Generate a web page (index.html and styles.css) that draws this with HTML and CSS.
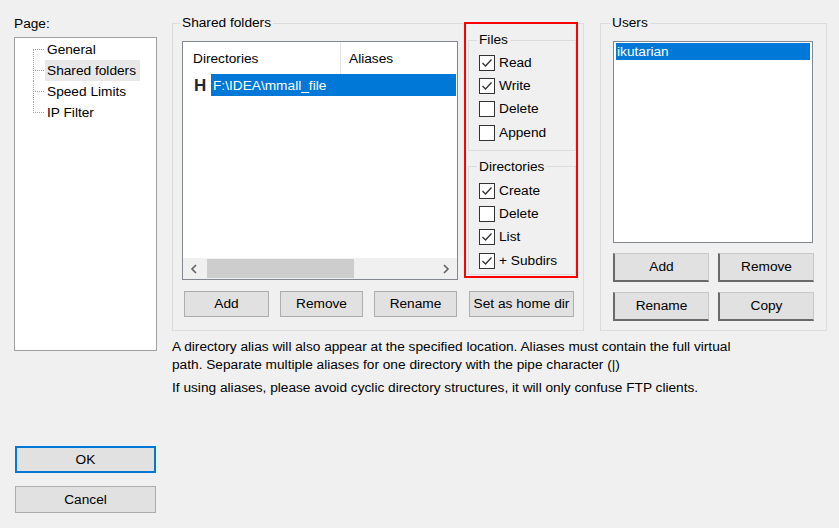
FILE: index.html
```html
<!DOCTYPE html>
<html lang="en">
<head>
<meta charset="utf-8">
<title>Shared folders</title>
<link rel="stylesheet" href="styles.css">
</head>
<body>
<div class="window">
  <aside class="nav">
    <div class="nav-label">Page:</div>
    <div class="tree">
      <ul class="tree-list">
        <li class="node first"><span class="conn"></span><span class="node-label">General</span></li>
        <li class="node"><span class="conn"></span><span class="node-label selected">Shared folders</span></li>
        <li class="node"><span class="conn"></span><span class="node-label">Speed Limits</span></li>
        <li class="node last"><span class="conn"></span><span class="node-label">IP Filter</span></li>
      </ul>
    </div>
    <div class="nav-actions">
      <button class="btn btn-default">OK</button>
      <button class="btn">Cancel</button>
    </div>
  </aside>

  <main class="content">
    <div class="groups">
      <fieldset class="group shared">
        <legend>Shared folders</legend>
        <div class="shared-top">
          <div class="listview">
            <div class="lv-header">
              <div class="lv-col lv-col-dir">Directories</div>
              <div class="lv-col lv-col-alias">Aliases</div>
            </div>
            <div class="lv-row">
              <span class="home-mark">H</span>
              <span class="lv-path">F:\IDEA\mmall_file</span>
            </div>
            <div class="lv-fill"></div>
            <div class="hscroll">
              <span class="arrow"><svg width="8" height="10" viewBox="0 0 8 10"><path d="M6 1 L2 5 L6 9" fill="none" stroke="#606060" stroke-width="1.6"/></svg></span>
              <span class="track"><span class="thumb"></span></span>
              <span class="arrow"><svg width="8" height="10" viewBox="0 0 8 10"><path d="M2 1 L6 5 L2 9" fill="none" stroke="#606060" stroke-width="1.6"/></svg></span>
            </div>
          </div>

          <div class="perms">
            <fieldset class="subgroup files">
              <legend>Files</legend>
              <label class="check-row"><span class="check"><svg width="14" height="14" viewBox="0 0 14 14"><path d="M2.5 7 L5.5 10 L11.5 3.5" fill="none" stroke="#333" stroke-width="1.3"/></svg></span>Read</label>
              <label class="check-row"><span class="check"><svg width="14" height="14" viewBox="0 0 14 14"><path d="M2.5 7 L5.5 10 L11.5 3.5" fill="none" stroke="#333" stroke-width="1.3"/></svg></span>Write</label>
              <label class="check-row"><span class="check"></span>Delete</label>
              <label class="check-row"><span class="check"></span>Append</label>
            </fieldset>
            <fieldset class="subgroup dirs">
              <legend>Directories</legend>
              <label class="check-row"><span class="check"><svg width="14" height="14" viewBox="0 0 14 14"><path d="M2.5 7 L5.5 10 L11.5 3.5" fill="none" stroke="#333" stroke-width="1.3"/></svg></span>Create</label>
              <label class="check-row"><span class="check"></span>Delete</label>
              <label class="check-row"><span class="check"><svg width="14" height="14" viewBox="0 0 14 14"><path d="M2.5 7 L5.5 10 L11.5 3.5" fill="none" stroke="#333" stroke-width="1.3"/></svg></span>List</label>
              <label class="check-row"><span class="check"><svg width="14" height="14" viewBox="0 0 14 14"><path d="M2.5 7 L5.5 10 L11.5 3.5" fill="none" stroke="#333" stroke-width="1.3"/></svg></span>+ Subdirs</label>
            </fieldset>
          </div>
        </div>
        <div class="shared-actions">
          <button class="btn btn-add">Add</button>
          <button class="btn btn-mid">Remove</button>
          <button class="btn btn-mid">Rename</button>
          <button class="btn btn-home">Set as home dir</button>
        </div>
      </fieldset>

      <fieldset class="group users">
        <legend>Users</legend>
        <div class="userlist">
          <div class="user selected-user">ikutarian</div>
        </div>
        <div class="user-actions">
          <button class="btn btn3d">Add</button>
          <button class="btn btn3d">Remove</button>
          <button class="btn btn3d">Rename</button>
          <button class="btn btn3d">Copy</button>
        </div>
      </fieldset>
    </div>

    <div class="notes">
      <p>A directory alias will also appear at the specified location. Aliases must contain the full virtual path. Separate multiple aliases for one directory with the pipe character (|)</p>
      <p>If using aliases, please avoid cyclic directory structures, it will only confuse FTP clients.</p>
    </div>
  </main>
</div>
</body>
</html>
```

FILE: styles.css
```css
* { box-sizing: border-box; }

html, body {
  margin: 0;
  padding: 0;
  background: #f0f0f0;
}

body {
  font-family: "Liberation Sans", Arial, sans-serif;
  font-size: 13.7px;
  line-height: 18px;
  color: #000;
}

.window {
  display: flex;
  align-items: flex-start;
  padding: 14px 0 0 14px;
  width: 839px;
  height: 528px;
}

/* ---------- left navigation ---------- */
.nav {
  width: 143px;
  display: flex;
  flex-direction: column;
}

.nav-label {
  height: 18px;
  padding-top: 1px;
}

.tree {
  margin-top: 5px;
  height: 314px;
  background: #fff;
  border: 1px solid #a0a0a0;
  padding-top: 1px;
}

.tree-list {
  list-style: none;
  margin: 0;
  padding: 0 0 0 18px;
}

.node {
  display: flex;
  height: 21px;
  align-items: center;
}

.conn {
  width: 12px;
  align-self: stretch;
  background-image:
    repeating-linear-gradient(to right, #a0a0a0 0 1px, transparent 1px 2px),
    repeating-linear-gradient(to bottom, #a0a0a0 0 1px, transparent 1px 2px);
  background-repeat: no-repeat;
  background-size: 12px 1px, 1px 100%;
  background-position: 0 50%, 0 0;
}

.node.first .conn {
  background-size: 12px 1px, 1px 50%;
  background-position: 0 50%, 0 100%;
}

.node.last .conn {
  background-size: 12px 1px, 1px 11px;
  background-position: 0 50%, 0 0;
}

.node-label {
  padding: 0 4px 0 2px;
  line-height: 21px;
}

.node-label.selected {
  background: #e8e8e8;
}

.nav-actions {
  display: flex;
  flex-direction: column;
  gap: 13px;
  margin-top: 95px;
  padding-left: 1px;
}

/* ---------- buttons ---------- */
.btn {
  font: inherit;
  color: #000;
  background: #e1e1e1;
  border: 1px solid #adadad;
  padding: 0;
  margin: 0;
  height: 26px;
}

.nav-actions .btn {
  width: 141px;
  height: 27px;
}

.btn-default {
  border: 2px solid #0078d7;
}

/* ---------- right content ---------- */
.content {
  margin-left: 15px;
  display: flex;
  flex-direction: column;
}

.groups {
  display: flex;
  align-items: stretch;
}

.group {
  margin: 0;
  border: 1px solid #dcdcdc;
  min-width: 0;
  height: 317px;
}

.group legend,
.subgroup legend {
  padding: 0 2px;
  margin-left: -2px;
  line-height: 18px;
}

.shared {
  width: 412px;
  padding: 9px 0 0 9px;
}

.shared-top {
  display: flex;
  align-items: flex-start;
  gap: 6px;
}

/* list view */
.listview {
  width: 276px;
  height: 239px;
  background: #fff;
  border: 1px solid #828790;
  display: flex;
  flex-direction: column;
}

.lv-header {
  display: flex;
  height: 32px;
  line-height: 33px;
}

.lv-col-dir {
  width: 158px;
  padding-left: 10px;
  border-right: 1px solid #e5e5e5;
}

.lv-col-alias {
  padding-left: 8px;
}

.lv-row {
  display: flex;
  height: 22px;
  align-items: stretch;
}

.home-mark {
  width: 28px;
  padding-left: 11px;
  font-weight: bold;
  font-size: 17px;
  line-height: 23px;
  color: #1c2636;
}

.lv-path {
  flex: 1;
  margin-right: 1px;
  background: #0078d7;
  color: #fff;
  padding-left: 2px;
  line-height: 23px;
}

.lv-fill {
  flex: 1;
}

.hscroll {
  height: 21px;
  display: flex;
  align-items: center;
  background: #f0f0f0;
}

.arrow {
  width: 22px;
  height: 100%;
  display: flex;
  align-items: center;
  justify-content: center;
}

.track {
  flex: 1;
  height: 100%;
  display: flex;
  align-items: center;
}

.thumb {
  width: 147px;
  height: 19px;
  margin-left: 2px;
  background: #cdcdcd;
}

/* permission panel (highlighted) */
.perms {
  width: 114px;
  height: 256px;
  margin-top: -19px;
  border: 2px solid #f00;
  padding: 0 0 0 2px;
  display: flex;
  flex-direction: column;
  overflow: hidden;
}

.subgroup {
  margin: 7px 0 0 0;
  border: 1px solid #dcdcdc;
  min-width: 0;
}

.files {
  padding: 1.5px 0 6px 10px;
}

.dirs {
  padding: 3px 0 2px 10px;
}

.check-row {
  display: flex;
  align-items: center;
  gap: 4px;
  height: 23.3px;
  padding-top: 1px;
}

.check {
  width: 16px;
  height: 16px;
  border: 1px solid #333;
  background: #fff;
  display: flex;
  align-items: center;
  justify-content: center;
  flex: none;
}

.shared-actions {
  display: flex;
  gap: 11px;
  margin-top: 11px;
  padding-left: 2px;
}

.btn-add { width: 85px; }
.btn-mid { width: 83px; }
.btn-home { width: 105px; margin-left: 1px; }

/* users */
.users {
  width: 227px;
  margin-left: 16px;
  padding: 9px 0 0 12px;
}

.users legend {
  margin-left: -3px;
}

.userlist {
  width: 200px;
  height: 202px;
  background: #fff;
  border: 1px solid #828790;
}

.user {
  margin: 1px 2px 0 2px;
  height: 17px;
  line-height: 18px;
  padding-left: 1px;
}

.selected-user {
  background: #0078d7;
  color: #fff;
}

.user-actions {
  display: grid;
  grid-template-columns: 96px 96px;
  column-gap: 9px;
  row-gap: 10px;
  margin-top: 10px;
}

.btn3d {
  height: 29px;
  border-top: 1px solid #c8c8c8;
  border-right: 1px solid #c8c8c8;
  border-left: 2px solid #6a6a6a;
  border-bottom: 2px solid #6a6a6a;
}

/* notes */
.notes {
  margin-top: 7px;
  width: 580px;
}

.notes p {
  margin: 0;
  line-height: 18px;
}

.notes p + p {
  margin-top: 5px;
}
```
